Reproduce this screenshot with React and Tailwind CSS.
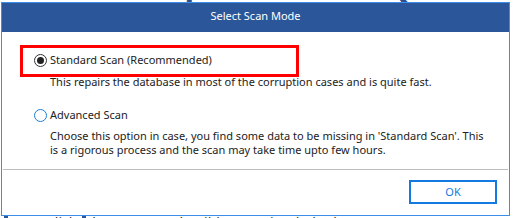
function Radio({ checked }) {
  if (checked) {
    return (
      <span className="w-[13px] h-[13px] rounded-full border border-[#333333] flex items-center justify-center shrink-0">
        <span className="w-[7px] h-[7px] rounded-full bg-[#222222]" />
      </span>
    )
  }
  return <span className="w-[13px] h-[13px] rounded-full border border-[#1e7fd8] shrink-0" />
}

export default function App() {
  return (
    <div className="relative w-[514px] h-[218px] overflow-hidden bg-white font-['Noto_Sans',sans-serif]">
      {/* page behind the dialog */}
      <div className="flex flex-col justify-between h-full">
        <h1 className="ml-[33px] mt-[-30px] text-[32px] leading-[32px] font-bold text-[#2a4f93] whitespace-nowrap">
          Stellar Repair for MS SQL
        </h1>
        <div className="flex items-center mb-[-12px] text-[14px] leading-[14px] text-[#333333] whitespace-nowrap">
          <span className="ml-[4px] w-[4px] h-[14px] bg-[#2b579a]" />
          <span className="ml-[38px]">Click</span>
          <span className="ml-[6px] w-[4px] h-[14px] bg-[#2b579a]" />
          <span className="ml-[6px]">button on Help Ribbon to view help document</span>
        </div>
      </div>

      {/* dialog */}
      <div className="absolute left-[1px] top-[2px] w-[509px] h-[214px] border border-[#3d8ee8] bg-white flex flex-col text-[#222222]">
        <div className="h-[29px] bg-[#2b579a] text-white text-[11px] flex items-center justify-center pb-[3px]">
          Select Scan Mode
        </div>

        <div className="flex-1 pt-[20px] pl-[32px] pr-[16px] text-[11px]">
          <div className="flex items-center gap-[3px] h-[16px]">
            <Radio checked />
            <span>Standard Scan (Recommended)</span>
          </div>
          <p className="mt-[7px] ml-[16px] leading-[14px]">
            This repairs the database in most of the corruption cases and is quite fast.
          </p>
          <div className="mt-[18px] flex items-center gap-[3px] h-[16px]">
            <Radio />
            <span>Advanced Scan</span>
          </div>
          <p className="mt-[6px] ml-[16px] leading-[14px]">
            Choose this option in case, you find some data to be missing in 'Standard Scan'. This is a rigorous process and the scan may take time upto few hours.
          </p>
        </div>

        <div className="mx-[1px] h-px bg-[#bdbdbd]" />

        <div className="h-[45px] flex justify-end items-start pt-[10px] pr-[12px]">
          <button className="w-[88px] h-[24px] border-2 border-[#1479e0] text-[#1479e0] text-[11px] flex items-center justify-center">
            OK
          </button>
        </div>

        {/* annotation */}
        <div className="absolute left-[18px] top-[42px] w-[279px] h-[32px] border-[3px] border-[#ff0000]" />
      </div>
    </div>
  )
}
